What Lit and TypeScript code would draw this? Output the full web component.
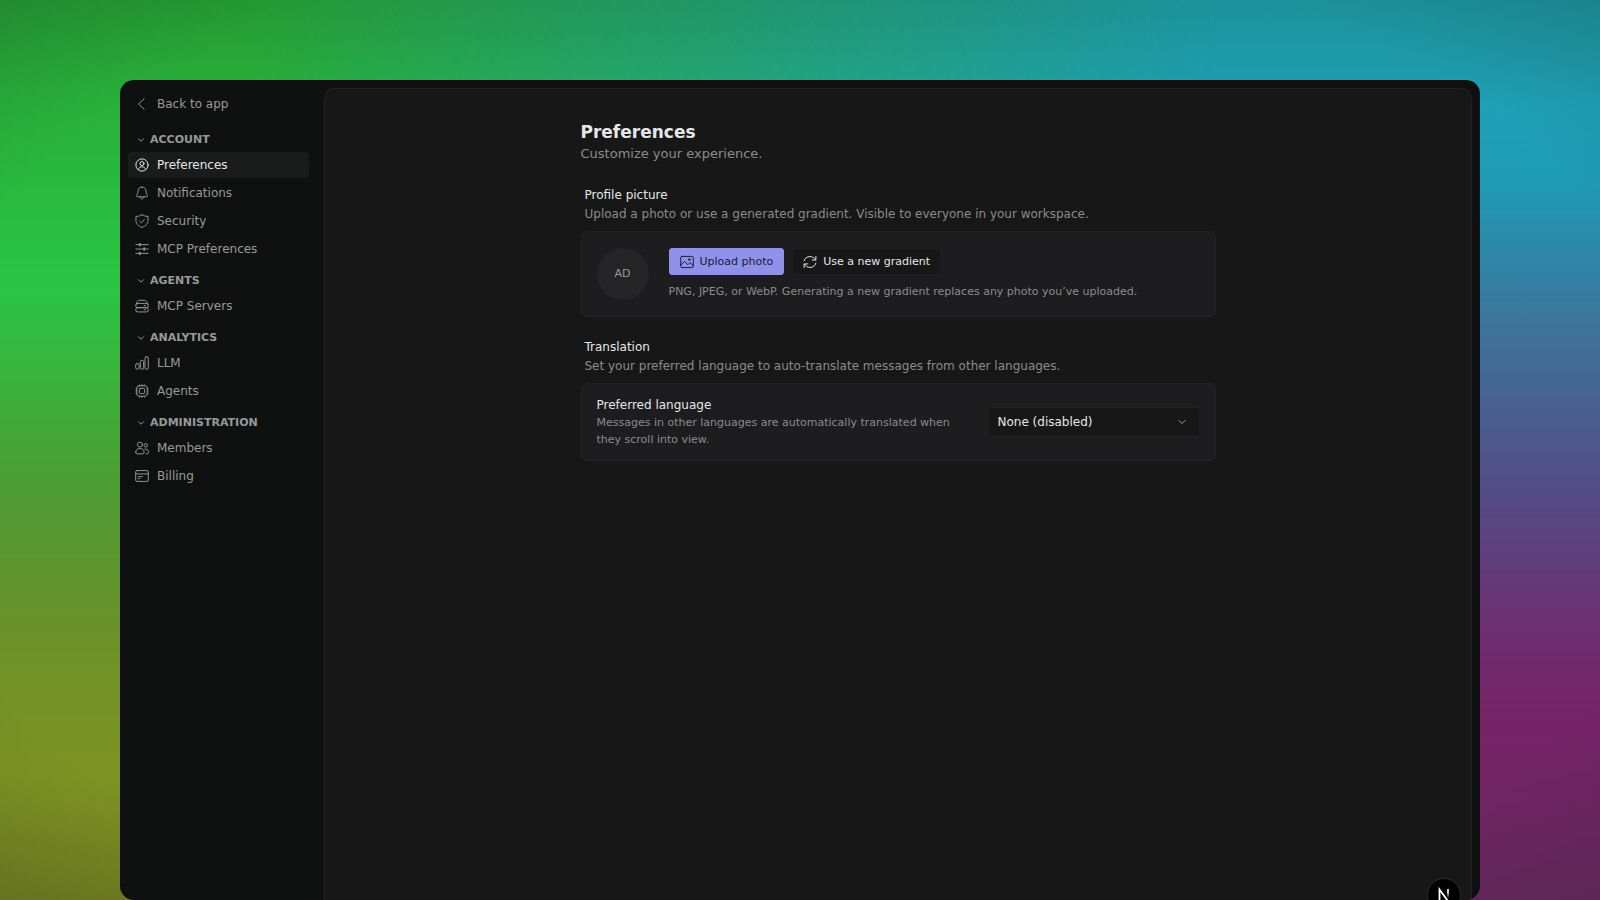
import { LitElement, html, css, svg } from "lit";
import { customElement, state } from "lit/decorators.js";

const icons: Record<string, unknown> = {
  back: svg`<path d="M10.5 2 4 8l6.500 6"/>`,
  chevron: svg`<path d="m3 5.5 5 5 5-5"/>`,
  user: svg`<circle cx="8" cy="8" r="7"/><circle cx="8" cy="6.300" r="2.300"/><path d="M4 13.200c.3-2.200 1.900-3.200 4-3.200s3.700 1 4 3.200"/>`,
  bell: svg`<path d="M8 1.200c-2.700 0-4.600 2-4.600 4.600 0 3-.9 3.900-1.600 5-.4.7 0 1.500.8 1.500h10.800c.8 0 1.200-.8.8-1.500-.7-1.100-1.600-2-1.600-5 0-2.600-1.900-4.600-4.600-4.600Z"/><path d="M5.800 12.500c.2 1.400 1.100 2.200 2.200 2.200s2-.8 2.200-2.200"/>`,
  shield: svg`<path d="M8 .8c1.900 1.300 4.100 1.900 6.900 2v4.500c0 3.900-2.700 6.500-6.900 8-4.200-1.500-6.900-4.100-6.900-8V2.800C3.900 2.700 6.100 2.100 8 .8Z"/><path d="m5.400 8.200 1.900 1.800 3.400-3.700"/>`,
  sliders: svg`<path d="M1 3h14M1 8h14M1 13h14"/><path d="M5.500 2v2M10.500 7v2M5.500 12v2" stroke-width="2"/>`,
  server: svg`<path d="M1.500 6.200C2 3 3.300 1.500 5 1.500h6c1.700 0 3 1.500 3.500 4.700"/><rect x=".8" y="5" width="14.400" height="4.900" rx="2.300"/><rect x=".8" y="9.900" width="14.400" height="4.900" rx="2.300"/><path d="M10.500 7.400h1.500M10.500 12.300h1.500"/>`,
  chart: svg`<rect x=".8" y="8.600" width="3.800" height="6.500" rx="1.500"/><rect x="6.100" y="5" width="3.800" height="10.100" rx="1.500"/><rect x="11.400" y=".9" width="3.800" height="14.200" rx="1.500"/>`,
  chip: svg`<rect x="2" y="2" width="12" height="12" rx="2.800"/><rect x="5" y="5" width="6" height="6" rx="1"/><path d="M5.300 1v1M8 1v1M10.700 1v1M5.300 14v1M8 14v1M10.700 14v1M1 5.300h1M1 8h1M1 10.700h1M14 5.300h1M14 8h1M14 10.700h1"/>`,
  users: svg`<circle cx="5.600" cy="4.100" r="2.900"/><path d="M.8 13c0-2.900 2-4.400 4.800-4.400s4.800 1.500 4.800 4.400c0 1.100-.7 1.700-1.700 1.700H2.500c-1 0-1.700-.6-1.700-1.700Z"/><circle cx="12.300" cy="5" r="2"/><path d="M11.200 9.200c2.500-.4 4.200 1.100 4.200 3.500 0 1.300-.7 2-1.600 2h-1.200"/>`,
  card: svg`<rect x=".8" y="1.800" width="14.400" height="12.400" rx="1.600"/><path d="M.8 5.600h14.400M3.600 8.800h5M3.600 11h2"/>`,
  image: svg`<rect x=".8" y="1.600" width="14.400" height="12.800" rx="1.600"/><path d="m1 11.600 4.200-4.400 3.600 4 2.600-2.600 3.600 3.400"/><circle cx="10.600" cy="5.200" r="1"/>`,
  refresh: svg`<path d="M1.300 6.600C2 3.600 4.600 1.800 8 1.800c2.700 0 4.800 1.300 6.300 3.600M14.700 1.600v4.200h-4.200M14.700 9.400c-.7 3-3.300 4.800-6.700 4.800-2.700 0-4.800-1.300-6.300-3.600M1.300 14.400v-4.200h4.200"/>`,
};

const icon = (name: string, cls = "") => html`<svg
  class="icon ${cls}"
  viewBox="0 0 16 16"
  aria-hidden="true"
>
  ${icons[name]}
</svg>`;

const groups = [
  {
    title: "Account",
    items: [
      ["user", "Preferences"],
      ["bell", "Notifications"],
      ["shield", "Security"],
      ["sliders", "MCP Preferences"],
    ],
  },
  { title: "Agents", items: [["server", "MCP Servers"]] },
  {
    title: "Analytics",
    items: [
      ["chart", "LLM"],
      ["chip", "Agents"],
    ],
  },
  {
    title: "Administration",
    items: [
      ["users", "Members"],
      ["card", "Billing"],
    ],
  },
];

@customElement("app-root")
export class AppRoot extends LitElement {
  @state() private current = "Preferences";
  @state() private closed: string[] = [];

  static styles = css`
    :host {
      display: block;
      font-family: "DejaVu Sans", sans-serif;
      font-size: 12px;
      line-height: 20px;
      color: #e6e6e8;
    }
    * {
      box-sizing: border-box;
    }
    h1,
    h2,
    p {
      margin: 0;
    }
    button,
    select {
      font: inherit;
      color: inherit;
      border: 0;
      margin: 0;
    }
    .icon {
      width: 14px;
      height: 14px;
      flex: none;
      fill: none;
      stroke: currentColor;
      stroke-width: 1.1;
      stroke-linecap: round;
      stroke-linejoin: round;
    }
    .desktop {
      position: relative;
      display: grid;
      height: 100vh;
      padding: 80px 120px 0;
      overflow: hidden;
      background: linear-gradient(
        180deg,
        #1c929c 0%,
        #1fa0b6 12%,
        #1f9bb6 20%,
        #3d749b 36%,
        #544b86 55%,
        #6e2e70 70%,
        #762368 80%,
        #68275d 100%
      );
    }
    .desktop::before {
      content: "";
      position: absolute;
      inset: 0;
      background: linear-gradient(
        180deg,
        #259a33 0%,
        #28ae3a 10%,
        #2ac544 32%,
        #4d9c34 54%,
        #6b9129 70%,
        #7f9323 86%,
        #727f20 100%
      );
      mask-image: linear-gradient(
        90deg,
        #000 16%,
        rgba(0, 0, 0, 0.75) 30%,
        rgba(0, 0, 0, 0.4) 50%,
        transparent 76%
      );
    }
    .desktop::after {
      content: "";
      position: absolute;
      inset: 0;
      background: radial-gradient(
        ellipse 72% 75% at 50% 50%,
        transparent 78%,
        rgba(16, 32, 30, 0.32) 125%
      );
    }
    .window {
      position: relative;
      z-index: 1;
      display: grid;
      grid-template-columns: 196px minmax(0, 1fr);
      min-height: 0;
      padding: 8px 8px 0;
      border-radius: 14px;
      overflow: hidden;
      background: #0f1110;
    }
    .sidebar {
      padding-right: 15px;
      color: #98999b;
    }
    .back,
    .item {
      display: flex;
      align-items: center;
      gap: 8px;
      height: 26px;
      padding: 0 7px;
      border-radius: 4px;
      color: inherit;
      text-decoration: none;
    }
    .back {
      height: 32px;
      margin-bottom: 8px;
    }
    .group {
      margin-bottom: 7px;
    }
    .toggle {
      display: flex;
      align-items: center;
      gap: 5px;
      width: 100%;
      height: 24px;
      padding: 0 9px;
      background: none;
      font-size: 11px;
      font-weight: 700;
      text-transform: uppercase;
    }
    .small {
      width: 8px;
      height: 8px;
      stroke-width: 2;
    }
    .items {
      display: grid;
      gap: 2px;
    }
    .current {
      background: #1a1c1b;
      color: #e6e6e8;
    }
    .panel {
      border: 1px solid #222223;
      border-bottom: 0;
      border-radius: 10px 10px 0 0;
      background: #171717;
      padding: 32px 24px;
      overflow: hidden;
    }
    .content {
      display: grid;
      gap: 20px;
      max-width: 635px;
      margin: 0 auto;
    }
    h1 {
      font-size: 17px;
      line-height: 22px;
      font-weight: 700;
    }
    .lead {
      font-size: 13px;
      line-height: 22px;
      color: #8b8b8e;
    }
    h2 {
      font-size: 12px;
      line-height: 20px;
      font-weight: 400;
    }
    .heading {
      padding: 0 4px 8px;
    }
    .muted {
      line-height: 18px;
      color: #8b8b8e;
    }
    .label {
      display: block;
      line-height: 18px;
    }
    .note {
      font-size: 11px;
      line-height: 17px;
      color: #8b8b8e;
    }
    .card {
      display: flex;
      align-items: center;
      gap: 20px;
      padding: 16px 15px;
      border: 1px solid #232325;
      border-radius: 6px;
      background: #1d1d20;
    }
    .compact {
      padding: 12px 15px;
    }
    .avatar {
      display: grid;
      place-items: center;
      flex: none;
      width: 52px;
      height: 52px;
      border-radius: 50%;
      background: #252527;
      color: #98999b;
      font-size: 11px;
    }
    .stack {
      display: grid;
      gap: 8px;
      min-width: 0;
    }
    .actions {
      display: flex;
      gap: 8px;
    }
    .button {
      display: flex;
      align-items: center;
      gap: 6px;
      height: 27px;
      padding: 0 10px;
      border: 1px solid #202023;
      border-radius: 3px;
      background: #171717;
      font-size: 11px;
    }
    .primary {
      border-color: #8f92e8;
      background: #8f92e8;
      color: #191a3a;
    }
    .grow {
      flex: 1;
      min-width: 0;
    }
    .field {
      position: relative;
      flex: none;
      width: 212px;
    }
    select {
      display: block;
      appearance: none;
      width: 100%;
      height: 30px;
      padding: 0 32px 0 9px;
      border: 1px solid #202023;
      border-radius: 3px;
      background: #171717;
    }
    .caret {
      position: absolute;
      right: 13px;
      top: 10px;
      width: 10px;
      height: 10px;
      stroke-width: 1.6;
      color: #98999b;
      pointer-events: none;
    }
    .badge {
      position: absolute;
      z-index: 2;
      right: 139px;
      bottom: -12px;
      display: grid;
      place-items: center;
      width: 34px;
      height: 34px;
      padding: 0;
      border: 1px solid #2b2b2b;
      border-radius: 50%;
      background: #000;
      color: #fff;
    }
    .mark {
      width: 16px;
      height: 16px;
    }
  `;

  private toggle(title: string) {
    this.closed = this.closed.includes(title)
      ? this.closed.filter((t) => t !== title)
      : [...this.closed, title];
  }

  render() {
    return html`
      <div class="desktop">
        <div class="window">
          <nav class="sidebar" aria-label="Settings">
            <a class="back" href="#app">${icon("back")}Back to app</a>
            ${groups.map(
              (g) => html`<div class="group">
                <button
                  class="toggle"
                  aria-expanded=${!this.closed.includes(g.title)}
                  @click=${() => this.toggle(g.title)}
                >
                  ${icon("chevron", "small")}${g.title}
                </button>
                ${this.closed.includes(g.title)
                  ? ""
                  : html`<div class="items">
                      ${g.items.map(
                        ([glyph, name]) => html`<a
                          class="item ${name === this.current ? "current" : ""}"
                          href="#${name}"
                          @click=${() => (this.current = name)}
                          >${icon(glyph)}${name}</a
                        >`
                      )}
                    </div>`}
              </div>`
            )}
          </nav>
          <main class="panel">
            <div class="content">
              <header>
                <h1>Preferences</h1>
                <p class="lead">Customize your experience.</p>
              </header>
              <section>
                <div class="heading">
                  <h2>Profile picture</h2>
                  <p class="muted">
                    Upload a photo or use a generated gradient. Visible to
                    everyone in your workspace.
                  </p>
                </div>
                <div class="card">
                  <span class="avatar">AD</span>
                  <div class="stack">
                    <div class="actions">
                      <button class="button primary">
                        ${icon("image")}Upload photo
                      </button>
                      <button class="button">
                        ${icon("refresh")}Use a new gradient
                      </button>
                    </div>
                    <p class="note">
                      PNG, JPEG, or WebP. Generating a new gradient replaces any
                      photo you’ve uploaded.
                    </p>
                  </div>
                </div>
              </section>
              <section>
                <div class="heading">
                  <h2>Translation</h2>
                  <p class="muted">
                    Set your preferred language to auto-translate messages from
                    other languages.
                  </p>
                </div>
                <div class="card compact">
                  <div class="grow">
                    <label class="label" for="language"
                      >Preferred language</label
                    >
                    <p class="note">
                      Messages in other languages are automatically translated
                      when they scroll into view.
                    </p>
                  </div>
                  <div class="field">
                    <select id="language">
                      <option>None (disabled)</option>
                    </select>
                    ${icon("chevron", "caret")}
                  </div>
                </div>
              </section>
            </div>
          </main>
        </div>
        <button class="badge" aria-label="Developer tools">
          <svg class="mark" viewBox="0 0 16 16" aria-hidden="true">
            <defs>
              <linearGradient id="fade" x1="0" y1="0" x2="0" y2="1">
                <stop offset="0.4" stop-color="#fff" />
                <stop offset="1" stop-color="#fff" stop-opacity="0" />
              </linearGradient>
            </defs>
            <path
              d="M3.500 14V2.500L13 15.500"
              fill="none"
              stroke="#fff"
              stroke-width="1.800"
            />
            <rect x="11.200" y="2" width="1.600" height="9" fill="url(#fade)" />
          </svg>
        </button>
      </div>
    `;
  }
}
